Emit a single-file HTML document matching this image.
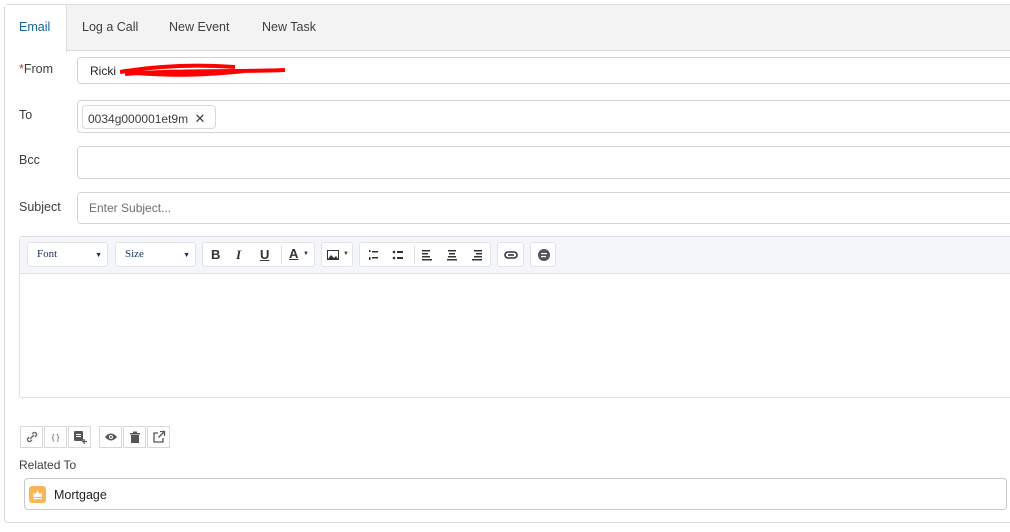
<!DOCTYPE html>
<html><head><style>
*{box-sizing:border-box;margin:0;padding:0}
body{width:1010px;height:532px;background:#fff;font-family:"Liberation Sans",sans-serif;font-size:13px;color:#3e3e3c;position:relative;overflow:hidden}
.a{position:absolute}
.card{left:4px;top:4px;width:1020px;height:519px;border:1px solid #dddbda;border-radius:4px}
.tabs{left:5px;top:5px;width:1010px;height:46px;background:#f3f3f3;border-bottom:1px solid #dddbda}
.tab{top:20px;font-size:12.5px;color:#3e3e3c}
.inp{border:1px solid #d4d4d4;border-radius:4px;left:77px;width:950px;background:#fff}
.lbl{left:19px;font-size:12.5px;color:#3e3e3c}
.tb{border:1px solid #e0e3e8;border-radius:3px;background:#fff;top:242px;height:25px}
.ib{top:426px;width:23px;height:22px;border:1px solid #d8d8d8;background:#fff;display:flex;align-items:center;justify-content:center}
</style></head><body>
<div class="a card"></div>
<div class="a tabs"></div>
<div class="a" style="left:5px;top:5px;width:62px;height:47px;background:#fff;border-right:1px solid #dddbda"></div>
<div class="a tab" style="left:19px;color:#16669a">Email</div>
<div class="a tab" style="left:82px">Log a Call</div>
<div class="a tab" style="left:169px">New Event</div>
<div class="a tab" style="left:262px">New Task</div>

<div class="a lbl" style="top:62px"><span style="color:#c23934">*</span>From</div>
<div class="a inp" style="top:57px;height:27px"></div>
<div class="a" style="left:90px;top:64px;font-size:12px;color:#222">Ricki</div>
<svg class="a" style="left:115px;top:60px" width="175" height="20"><path d="M5 12 C40 6 80 4 120 7 M10 14 C60 10 120 12 170 10 M20 13 C60 16 90 15 130 11" stroke="#f00" stroke-width="4" fill="none"/></svg>

<div class="a lbl" style="top:108px">To</div>
<div class="a inp" style="top:100px;height:33px"></div>
<div class="a" style="left:82px;top:105px;width:134px;height:24px;border:1px solid #d8d8d8;border-radius:4px;font-size:12px;padding:5px 0 0 5px;color:#3e3e3c">0034g000001et9m <span style="font-size:13px;margin-left:3px">✕</span></div>

<div class="a lbl" style="top:153px">Bcc</div>
<div class="a inp" style="top:146px;height:33px"></div>

<div class="a lbl" style="top:200px">Subject</div>
<div class="a inp" style="top:192px;height:32px"></div>
<div class="a" style="left:89px;top:201px;font-size:12px;color:#706e6b">Enter Subject...</div>

<div class="a" style="left:19px;top:236px;width:1000px;height:162px;border:1px solid #dde0e6;border-radius:3px"></div>
<div class="a" style="left:20px;top:237px;width:1000px;height:37px;background:#f4f6f9;border-bottom:1px solid #dde0e6"></div>
<div class="a tb" style="left:27px;width:81px;font-family:'Liberation Serif',serif;font-size:11px;color:#16325c;padding:5px 9px">Font<span style="position:absolute;right:5px;font-size:7px;top:8px">▼</span></div>
<div class="a tb" style="left:115px;width:81px;font-family:'Liberation Serif',serif;font-size:11px;color:#16325c;padding:5px 9px">Size<span style="position:absolute;right:5px;font-size:7px;top:8px">▼</span></div>
<div class="a tb" style="left:202px;width:113px;font-weight:bold;font-size:13px;color:#333">
<span class="a" style="left:8px;top:4px">B</span><span class="a" style="left:33px;top:4px;font-style:italic;font-family:'Liberation Serif',serif">I</span><span class="a" style="left:57px;top:4px;text-decoration:underline">U</span><span class="a" style="left:78px;top:3px;width:1px;height:18px;background:#ddd"></span><span class="a" style="left:86px;top:3px;text-decoration:underline">A</span><span class="a" style="left:100px;top:8px;font-size:6px">▼</span></div>
<div class="a tb" style="left:321px;width:32px"><svg class="a" style="left:5px;top:7px" width="12" height="10"><rect x="0.5" y="0.5" width="11" height="9" fill="none" stroke="#333"/><path d="M1 9 L4 5 L7 8 L9 6 L11 9Z" fill="#333"/></svg><span class="a" style="left:21px;top:8px;font-size:6px">▼</span></div>
<div class="a tb" style="left:359px;width:132px"><svg class="a" width="130" height="24"><g fill="#333"><rect x="9" y="7" width="1.5" height="2"/><rect x="9" y="14" width="1.5" height="3"/><rect x="12" y="8" width="6" height="1.5"/><rect x="12" y="14" width="6" height="1.5"/><circle cx="34" cy="9" r="1.3"/><circle cx="34" cy="15" r="1.3"/><rect x="37" y="8" width="6" height="2"/><rect x="37" y="14" width="6" height="2"/><rect x="62" y="7" width="8" height="1.5"/><rect x="62" y="10" width="6" height="1.5"/><rect x="62" y="13" width="8" height="1.5"/><rect x="62" y="16" width="10" height="1.5"/><rect x="88" y="7" width="8" height="1.5"/><rect x="89" y="10" width="6" height="1.5"/><rect x="88" y="13" width="8" height="1.5"/><rect x="87" y="16" width="10" height="1.5"/><rect x="114" y="7" width="8" height="1.5"/><rect x="116" y="10" width="6" height="1.5"/><rect x="114" y="13" width="8" height="1.5"/><rect x="112" y="16" width="10" height="1.5"/></g><rect x="54" y="3" width="1" height="18" fill="#ddd"/></svg></div>
<div class="a tb" style="left:497px;width:27px"><svg class="a" style="left:6px;top:8px" width="14" height="8"><rect x="1" y="1" width="12" height="6" rx="3" fill="none" stroke="#333" stroke-width="1.6"/><rect x="4" y="3.2" width="6" height="1.6" fill="#333"/></svg></div>
<div class="a tb" style="left:530px;width:26px"><svg class="a" style="left:6px;top:5px" width="14" height="14"><circle cx="7" cy="7" r="6" fill="#555"/><rect x="4" y="5" width="6" height="1.2" fill="#fff"/><rect x="4" y="8" width="5" height="1.2" fill="#fff"/></svg></div>

<div class="a ib" style="left:20px"><svg width="12" height="12"><path d="M4 8 L8 4 M6 3 L8 1.5 A2 2 0 0 1 10.5 4 L9 6 M6 9 L4 10.5 A2 2 0 0 1 1.5 8 L3 6" stroke="#666" stroke-width="1.4" fill="none"/></svg></div>
<div class="a ib" style="left:44px;font-size:8px;color:#555">{ }</div>
<div class="a ib" style="left:68px"><svg width="14" height="14"><rect x="1" y="1" width="9" height="10" rx="1" fill="#555"/><rect x="3" y="4" width="5" height="1" fill="#fff"/><rect x="3" y="6" width="5" height="1" fill="#fff"/><path d="M11 9v5M9 11.5h5" stroke="#555" stroke-width="1.3"/></svg></div>
<div class="a ib" style="left:99px"><svg width="14" height="10"><path d="M1 5 Q7 -2 13 5 Q7 12 1 5Z" fill="#555"/><circle cx="7" cy="5" r="2" fill="#fff"/><circle cx="7" cy="5" r="1" fill="#555"/></svg></div>
<div class="a ib" style="left:123px"><svg width="12" height="12"><rect x="1" y="2" width="10" height="1.5" fill="#555"/><rect x="4" y="0.5" width="4" height="1.5" fill="#555"/><rect x="2" y="4" width="8" height="8" fill="#555"/></svg></div>
<div class="a ib" style="left:147px"><svg width="14" height="14"><path d="M6 3H2v9h9V8" stroke="#555" stroke-width="1.3" fill="none"/><path d="M8 1.5h4.5V6M12.5 1.5L6.5 7.5" stroke="#555" stroke-width="1.3" fill="none"/></svg></div>

<div class="a lbl" style="top:458px;font-size:12px">Related To</div>
<div class="a" style="left:24px;top:478px;width:983px;height:32px;border:1px solid #c9c9c9;border-radius:4px"></div>
<div class="a" style="left:29px;top:486px;width:17px;height:17px;background:#f8b656;border-radius:3px"><svg width="17" height="17"><path d="M4 6 L6 8.5 L8.5 5 L11 8.5 L13 6 L12.5 11 H4.5Z M4.5 12 h8 v1.3 h-8Z" fill="#fff"/></svg></div>
<div class="a" style="left:54px;top:488px;font-size:12.5px;color:#222">Mortgage</div>
</body></html>
